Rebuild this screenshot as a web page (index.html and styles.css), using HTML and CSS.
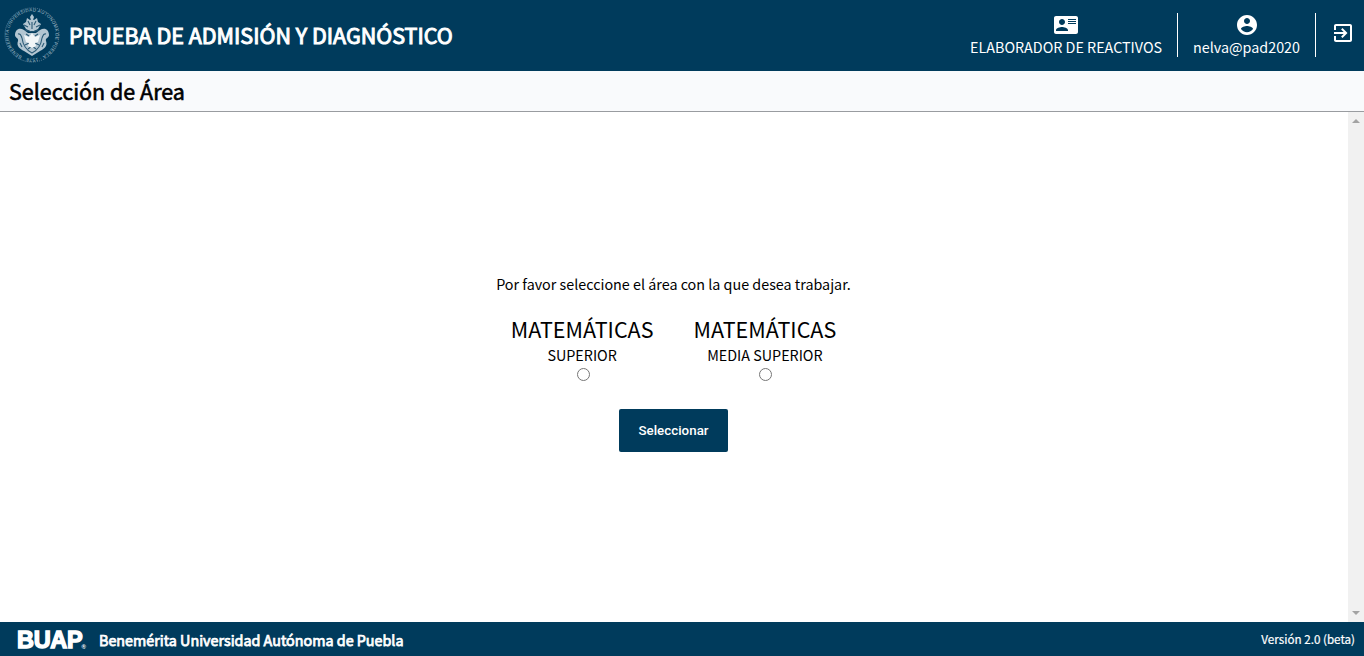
FILE: index.html
```html
<!DOCTYPE html>
<html lang="es">
<head>
<meta charset="utf-8">
<title>Prueba de Admisión y Diagnóstico</title>
<link rel="stylesheet" href="styles.css">
</head>
<body>
<header class="topbar">
  <svg class="crest" viewBox="0 0 56 56" role="img" aria-label="BUAP">
    <defs><path id="ring" d="M28 51.500A23.500 23.500 0 1 1 28.100 51.500"/></defs>
    <circle class="crest-line" cx="28" cy="28" r="27" stroke-dasharray="1 1"/>
    <text class="crest-text" transform="rotate(18 28 28)"><textPath href="#ring" startOffset="3" textLength="142">BENEMERITA UNIVERSIDAD AUTONOMA DE PUEBLA · 1578</textPath></text>
    <g class="crest-shape">
      <path d="M28 7l2 3-1 3h-2l-1-3zM23 11l3 2 2-1 2 1 3-2 1 4 3 2-3 5-4 2h-4l-4-2-3-5 3-2z"/>
      <path d="M20 23c-5-3-9 0-9 5 0 3 4 3 3 6-2 5 2 8 6 10l8 5 8-5c4-2 8-5 6-10-1-3 3-3 3-6 0-5-4-8-9-5l-4 3h-8z"/>
    </g>
    <g class="crest-detail">
      <path d="M24 14l2 4M32 14l-2 4M20 18l4 2M36 18l-4 2M28 15v7M21 23l7 2 7-2M14 27c3-1 3 2 4 4M42 27c-3-1-3 2-4 4M18 31c1 8 4 12 10 15 6-3 9-7 10-15M22 27l3 2M34 27l-3 2M21 38l4-2M35 38l-4-2M24 42l4-3 4 3M16 36l2 4M40 36l-2 4"/>
    </g>
    <path class="crest-bright" d="M20 28l5 2 3-4 3 4 5-2-2 7-3 1 1 3-4 2-4-2 1-3-3-1z"/>
  </svg>
  <h1 class="title">PRUEBA DE ADMISIÓN Y DIAGNÓSTICO</h1>
  <div class="account">
    <div class="account-item role">
      <svg class="icon" viewBox="0 0 24 24"><path fill-rule="evenodd" d="M22 3H2C.9 3 0 3.900 0 5v14c0 1.100.9 2 2 2h20c1.100 0 1.990-.9 1.990-2L24 5c0-1.100-.9-2-2-2zM8 6c1.660 0 3 1.340 3 3s-1.340 3-3 3-3-1.340-3-3 1.340-3 3-3zm6 12H2v-1c0-2 4-3.100 6-3.100s6 1.100 6 3.100v1zm8-11h-8V6h8v1zm0 2h-8V8h8v1zm0 2h-8v-1h8v1z"/></svg>
      <span class="label">ELABORADOR DE REACTIVOS</span>
    </div>
    <div class="account-item user">
      <svg class="icon" viewBox="0 0 24 24"><path d="M12 2C6.480 2 2 6.480 2 12s4.480 10 10 10 10-4.480 10-10S17.520 2 12 2zm0 3c1.660 0 3 1.340 3 3s-1.340 3-3 3-3-1.340-3-3 1.340-3 3-3zm0 14.200c-2.500 0-4.710-1.280-6-3.220.03-1.990 4-3.080 6-3.080 1.990 0 5.970 1.090 6 3.080-1.290 1.940-3.500 3.220-6 3.220z"/></svg>
      <span class="label">nelva@pad2020</span>
    </div>
    <a class="logout" aria-label="Salir"><svg class="icon" viewBox="0 0 24 24"><path d="M10.090 15.590L11.500 17l5-5-5-5-1.410 1.410L12.670 11H3v2h9.670l-2.580 2.590zM19 3H5c-1.110 0-2 .9-2 2v4h2V5h14v14H5v-4H3v4c0 1.100.89 2 2 2h14c1.100 0 2-.9 2-2V5c0-1.100-.9-2-2-2z"/></svg></a>
  </div>
</header>
<div class="subbar"><h2 class="subtitle">Selección de Área</h2></div>
<main class="main">
  <form class="chooser">
    <p class="prompt">Por favor seleccione el área con la que desea trabajar.</p>
    <div class="options">
      <label class="option"><span class="area">MATEMÁTICAS</span><span class="level">SUPERIOR</span><input class="radio" type="radio" name="area"></label>
      <label class="option"><span class="area">MATEMÁTICAS</span><span class="level">MEDIA SUPERIOR</span><input class="radio" type="radio" name="area"></label>
    </div>
    <button class="submit" type="button">Seleccionar</button>
  </form>
  <div class="scrollbar"><span class="arrow up"></span><span class="arrow down"></span></div>
</main>
<footer class="footer">
  <span class="brand">BUAP<span class="reg">®</span></span>
  <span class="university">Benemérita Universidad Autónoma de Puebla</span>
  <span class="version">Versión 2.0 (beta)</span>
</footer>
</body>
</html>
```
FILE: styles.css
```css
* { box-sizing: border-box; }
body {
  margin: 0;
  height: 656px;
  display: flex;
  flex-direction: column;
  overflow: hidden;
  font-family: "Noto Sans CJK JP", "Noto Sans", sans-serif;
  font-size: 14.34px;
  line-height: 20px;
  color: #000;
  background: #fff;
}
h1, h2, p { margin: 0; }
span { white-space: nowrap; }
.topbar { display: flex; height: 71px; background: #003b5c; color: #fff; }
.crest { width: 56px; height: 56px; margin: 7px 9px 0 4px; }
.crest-line { fill: none; stroke: #5d8299; stroke-width: 1; }
.crest-text { font: 400 4.4px "Liberation Sans", sans-serif; fill: #a9c0ce; }
.crest-shape { fill: #b3c6d2; }
.crest-detail { fill: none; stroke: #2b5a76; stroke-width: 1.1; }
.crest-bright { fill: #f2f6f8; }
.title { font-size: 21.5px; line-height: 30px; font-weight: 400; -webkit-text-stroke: 1px #fff; margin-top: 20px; white-space: nowrap; }
.account { display: flex; margin: 13px 9px 0 auto; height: 44px; }
.account-item { display: flex; flex-direction: column; align-items: center; border-right: 1px solid #fff; padding: 0 15px; }
.icon { width: 24px; height: 24px; fill: #fff; display: block; flex: none; }
.label { line-height: 20px; }
.logout { padding: 8px 0 0 15px; }
.subbar { height: 41px; flex: none; background: #f9fafc; border-bottom: 1px solid #999ca0; padding: 5px 9px 0; }
.subtitle { font-size: 21.5px; line-height: 30px; font-weight: 400; -webkit-text-stroke: .6px #000; }
.main { flex: 1; display: flex; min-height: 0; }
.chooser { flex: 1; display: flex; flex-direction: column; align-items: center; padding: 161px 1px 0 0; }
.prompt { line-height: 22px; white-space: nowrap; }
.options { display: flex; gap: 40px; margin-top: 19px; }
.option { display: flex; flex-direction: column; align-items: center; }
.area { font-size: 21.5px; line-height: 30px; }
.level { line-height: 20px; margin-top: 1px; }
.radio { margin: 3px 0 0 2px; width: 13px; height: 13px; }
.submit { margin: 28px 0 0; width: 109px; height: 43px; border: 0; border-radius: 2px; background: #003b5c; color: #fff; font: 500 13.33px Roboto, sans-serif; padding: 0; letter-spacing: .02px; }
.scrollbar { width: 16px; background: #f1f1f1; display: flex; flex-direction: column; justify-content: space-between; align-items: center; padding: 7px 0; }
.arrow { border: 4px solid transparent; border-top-width: 0; border-bottom: 4px solid #a3a3a3; }
.down { transform: rotate(180deg); }
.footer { height: 34px; flex: none; display: flex; background: #003b5c; color: #fff; padding: 0 9px 0 17px; }
.brand { width: 82px; display: flex; font: 700 23.5px/37px "Liberation Sans", sans-serif; -webkit-text-stroke: 1.4px #fff; letter-spacing: -.3px; }
.reg { font-size: 6px; line-height: 12px; -webkit-text-stroke: 0; margin: 19px 0 0 -1px; }
.university { font-size: 14.33px; -webkit-text-stroke: .75px #fff; line-height: 36px; }
.version { margin-left: auto; font-size: 11.65px; line-height: 34px; -webkit-text-stroke: .2px #fff; }
```
